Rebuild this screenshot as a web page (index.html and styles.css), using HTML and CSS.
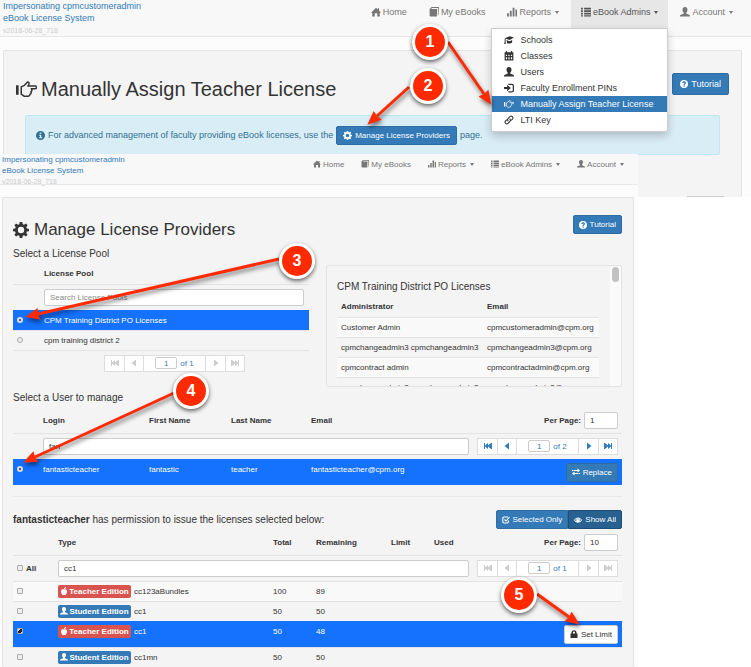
FILE: index.html
```html
<!DOCTYPE html>
<html lang="en">
<head>
  <meta charset="UTF-8">
  <title>eBook License System</title>
  <link rel="stylesheet" href="styles.css">
</head>
<body>
  <!-- icons -->
  <svg class="sprite" aria-hidden="true">
    <symbol id="home" viewBox="0 0 16 16"><path d="M8 1L0 9h2v6h4v-5h4v5h4V9h2l-3-3V2h-2v2z"/></symbol>
    <symbol id="book" viewBox="0 0 16 16"><path d="M4 0h12l-1 13h-1l.5-11.500H4V3h9l-.500 12H2L1 14V3z"/></symbol>
    <symbol id="stats" viewBox="0 0 16 16"><path d="M0 10h3v5H0zM4.500 6h3v9h-3zM9 1h3v14H9zM13.500 4H16v11h-2.500z"/></symbol>
    <symbol id="list" viewBox="0 0 16 16"><path d="M0 1h3v3H0zM5 1h11v3H5zM0 5h3v3H0zM5 5h11v3H5zM0 9h3v3H0zM5 9h11v3H5zM0 13h3v2H0zM5 13h11v2H5z"/></symbol>
    <symbol id="user" viewBox="0 0 16 16"><path d="M8 0c2.500 0 4 1.500 4 4.200C12 6.500 11 8 10 9v1.500c0 .5 5 1.500 6 3V15H0v-1.500c1-1.500 6-2.500 6-3V9C5 8 4 6.500 4 4.200 4 1.500 5.500 0 8 0z"/></symbol>
    <symbol id="cap" viewBox="0 0 16 16"><path d="M1 5l8-3 7 2-7 4zM4 8l5 2 4-2v4c-2 2-6 2-8 1zM1 6h1.500v5l1 3H0l1-3z"/></symbol>
    <symbol id="calendar" viewBox="0 0 16 16"><path fill-rule="evenodd" d="M1 2h2V0h2v2h6V0h2v2h2v13H1zM3 6v2h2V6zm4 0v2h2V6zm4 0v2h2V6zM3 10v3h2v-3zm4 0v3h2v-3zm4 0v3h2v-3z"/></symbol>
    <symbol id="login" viewBox="0 0 16 16"><path d="M0 6.500h5V3l6 5-6 5V9.500H0zM7 1h5c3 0 4 1 4 4v6c0 3-1 4-4 4H7v-2h5c1.500 0 2-.5 2-2V5c0-1.500-.5-2-2-2H7z"/></symbol>
    <symbol id="hand" viewBox="0 0 20 16"><path d="M0 4h2.500v9H0z"/><path d="M5 5.500L8 4l3-3.200c2.300 0 1.500 2.700.3 3.900H19c1.200 2.300 0 2.600-1 2.600h-3.500c1 1 .8 2.500-.3 2.700.6 1.200.2 2.300-.9 2.500-.2 1.500-1 2-2 2H8l-3-2z" fill="none" stroke="currentColor" stroke-width="1.400" stroke-linejoin="round"/></symbol>
    <symbol id="link" viewBox="0 0 16 16"><path d="M7 10C4.500 8 6 6 7.500 4.500l2-2C12 0 16 3.500 13.500 6.500l-2 2M9 6c2.500 2 1 4-.500 5.500l-2 2C4 16 0 12.500 2.500 9.500l2-2" fill="none" stroke="currentColor" stroke-width="1.700"/></symbol>
    <symbol id="info" viewBox="0 0 16 16"><path fill-rule="evenodd" d="M8 0a8 8 0 100 16A8 8 0 008 0zM6.500 2.500h3V5h-3zM5.500 6.500h4V11H11v2H5.500v-2H7V8.500H5.500z"/></symbol>
    <symbol id="question" viewBox="0 0 16 16"><path fill-rule="evenodd" d="M8 0a8 8 0 100 16A8 8 0 008 0zM7 11h2.500v2.300H7zM4.500 6C4.500 1.500 12 1.500 12 6c0 2-2.500 2.200-2.500 4H7c0-3 2.300-2.800 2.300-4 0-1.600-2.300-1.400-2.300 0z"/></symbol>
    <symbol id="cog" viewBox="0 0 16 16"><path fill-rule="evenodd" d="M6.700 0h2.600l.4 2.200 1.400.6L12.900 1.500l1.700 1.700-1.300 1.900.6 1.400 2.100.4v2.300l-2.100.4-.6 1.400 1.300 1.800-1.700 1.700-1.800-1.200-1.400.5L9.300 16H6.700l-.4-2.200-1.400-.5-1.800 1.200-1.700-1.700L2.700 11l-.6-1.400L0 9.200V6.900l2.100-.4.6-1.400L1.400 3.200l1.700-1.700 1.800 1.300 1.400-.6zM8 4.800a3.200 3.200 0 100 6.400 3.200 3.200 0 000-6.400z"/></symbol>
    <symbol id="first" viewBox="0 0 16 16"><path d="M0 2h2v5l6-5v5l6-5h2v12h-2L8 9v5L2 9v5H0z"/></symbol>
    <symbol id="prev" viewBox="0 0 16 16"><path d="M3 8l9-7v14z"/></symbol>
    <symbol id="next" viewBox="0 0 16 16"><path d="M13 8L4 1v14z"/></symbol>
    <symbol id="last" viewBox="0 0 16 16"><path d="M16 2h-2v5L8 2v5L2 2H0v12h2l6-5v5l6-5v5h2z"/></symbol>
    <symbol id="transfer" viewBox="0 0 16 16"><path d="M0 4h2v2H0zM3 4h8V1l5 4-5 4V6H3zM16 10h-2v2h2zM13 10H5V7l-5 4 5 4v-3h8z"/></symbol>
    <symbol id="check" viewBox="0 0 16 16"><path d="M12 2H4C2 2 1.500 3 1.500 5v6c0 2 .5 3 2.500 3h6c2 0 3-.5 3-3V9M5 7l3 3 7-8" fill="none" stroke="currentColor" stroke-width="2.200"/></symbol>
    <symbol id="eye" viewBox="0 0 16 16"><path fill-rule="evenodd" d="M0 8c4-7 12-7 16 0-4 7-12 7-16 0zm2 0c1 1.500 2 2.500 3.500 3C4 9 4 7 5.500 5 4 5.500 3 6.500 2 8zm8.500-3c1.500 2 1.500 4 0 6 1.500-.5 2.500-1.500 3.500-3-1-1.500-2-2.500-3.500-3zM7 5v2h2V5z"/></symbol>
    <symbol id="apple" viewBox="0 0 16 16"><path d="M8 4c0-2 1-4 4-4 0 2-1 4-4 4zm0 1c2-1 6-1 6 4 0 3-2 7-4 7-1 0-1-.5-2-.5S7 16 6 16c-2 0-4-4-4-7 0-5 4-5 6-4z"/></symbol>
    <symbol id="lock" viewBox="0 0 16 16"><path fill-rule="evenodd" d="M1 7h2V5c0-6 10-6 10 0v2h2v9H1zm5 0h4V5c0-2.500-4-2.500-4 0z"/></symbol>
  </svg>

  <div class="shots">
    <section class="page page-back">
      <header class="navbar">
        <div class="brand">
          <a href="#">Impersonating cpmcustomeradmin</a>
          <a href="#">eBook License System</a>
          <small>v2018-06-28_718</small>
        </div>
        <nav>
          <ul class="nav">
            <li><a href="#"><svg class="icon"><use href="#home"/></svg>Home</a></li>
            <li><a href="#"><svg class="icon"><use href="#book"/></svg>My eBooks</a></li>
            <li><a href="#"><svg class="icon"><use href="#stats"/></svg>Reports<span class="caret"></span></a></li>
            <li class="open">
              <a href="#"><svg class="icon"><use href="#list"/></svg>eBook Admins<span class="caret"></span></a>
              <ul class="dropdown">
                <li><a href="#"><svg class="icon"><use href="#cap"/></svg>Schools</a></li>
                <li><a href="#"><svg class="icon"><use href="#calendar"/></svg>Classes</a></li>
                <li><a href="#"><svg class="icon"><use href="#user"/></svg>Users</a></li>
                <li><a href="#"><svg class="icon"><use href="#login"/></svg>Faculty Enrollment PINs</a></li>
                <li class="active"><a href="#"><svg class="icon"><use href="#hand"/></svg>Manually Assign Teacher License</a></li>
                <li><a href="#"><svg class="icon"><use href="#link"/></svg>LTI Key</a></li>
              </ul>
            </li>
            <li><a href="#"><svg class="icon"><use href="#user"/></svg>Account<span class="caret"></span></a></li>
          </ul>
        </nav>
      </header>
      <div class="well">
        <div class="title-row">
          <h1><svg class="icon"><use href="#hand"/></svg>Manually Assign Teacher License</h1>
          <button class="btn"><svg class="icon"><use href="#question"/></svg>Tutorial</button>
        </div>
        <div class="alert">
          <svg class="icon"><use href="#info"/></svg>
          <span>For advanced management of faculty providing eBook licenses, use the</span>
          <button class="btn"><svg class="icon"><use href="#cog"/></svg>Manage License Providers</button>
          <span>page.</span>
        </div>
        <div class="well-foot"></div>
      </div>
    </section>

    <section class="page page-front">
      <header class="navbar">
        <div class="brand">
          <a href="#">Impersonating cpmcustomeradmin</a>
          <a href="#">eBook License System</a>
          <small>v2018-06-28_718</small>
        </div>
        <nav>
          <ul class="nav">
            <li><a href="#"><svg class="icon"><use href="#home"/></svg>Home</a></li>
            <li><a href="#"><svg class="icon"><use href="#book"/></svg>My eBooks</a></li>
            <li><a href="#"><svg class="icon"><use href="#stats"/></svg>Reports<span class="caret"></span></a></li>
            <li><a href="#"><svg class="icon"><use href="#list"/></svg>eBook Admins<span class="caret"></span></a></li>
            <li><a href="#"><svg class="icon"><use href="#user"/></svg>Account<span class="caret"></span></a></li>
          </ul>
        </nav>
      </header>
      <div class="well">
        <div class="title-row">
          <h1><svg class="icon"><use href="#cog"/></svg>Manage License Providers</h1>
          <button class="btn"><svg class="icon"><use href="#question"/></svg>Tutorial</button>
        </div>

        <div class="pools">
          <div class="pool-list">
            <h2>Select a License Pool</h2>
            <table class="pool-table">
              <colgroup><col class="c-radio"><col></colgroup>
              <tr class="head"><th></th><th>License Pool</th></tr>
              <tr class="filter"><td></td><td><input class="field" type="text" placeholder="Search License Pools" aria-label="Search License Pools"></td></tr>
              <tr class="selected"><td><input type="radio" name="pool" id="pool1" checked></td><td><label for="pool1">CPM Training District PO Licenses</label></td></tr>
              <tr><td><input type="radio" name="pool" id="pool2"></td><td><label for="pool2">cpm training district 2</label></td></tr>
            </table>
            <div class="pool-foot">
              <div class="pager off">
                <button disabled aria-label="First"><svg class="icon"><use href="#first"/></svg></button>
                <button disabled aria-label="Previous"><svg class="icon"><use href="#prev"/></svg></button>
                <label class="pager-page"><input type="text" value="1">of 1</label>
                <button disabled aria-label="Next"><svg class="icon"><use href="#next"/></svg></button>
                <button disabled aria-label="Last"><svg class="icon"><use href="#last"/></svg></button>
              </div>
            </div>
          </div>
          <div class="admins">
            <div class="admins-body">
              <h2>CPM Training District PO Licenses</h2>
              <table class="admin-table">
                <colgroup><col class="c-admin"><col></colgroup>
                <tr class="head"><th>Administrator</th><th>Email</th></tr>
                <tr><td>Customer Admin</td><td>cpmcustomeradmin@cpm.org</td></tr>
                <tr><td>cpmchangeadmin3 cpmchangeadmin3</td><td>cpmchangeadmin3@cpm.org</td></tr>
                <tr><td>cpmcontract admin</td><td>cpmcontractadmin@cpm.org</td></tr>
                <tr><td>cpmchangeadmin2 cpmchangeadmin2</td><td>cpmchangeadmin2@cpm.org</td></tr>
              </table>
            </div>
            <div class="track"><div class="thumb"></div></div>
          </div>
        </div>

        <h2>Select a User to manage</h2>
        <table class="user-table">
          <colgroup><col class="c-sel"><col class="c-login"><col class="c-first"><col class="c-last"><col><col class="c-tools"></colgroup>
          <tr class="head">
            <th></th><th>Login</th><th>First Name</th><th>Last Name</th><th>Email</th>
            <th><label class="per-page">Per Page:<input class="field" type="text" value="1"></label></th>
          </tr>
          <tr class="filter">
            <td></td>
            <td colspan="4"><input class="field" type="text" value="fan" aria-label="Search users"></td>
            <td>
              <div class="pager">
                <button aria-label="First"><svg class="icon"><use href="#first"/></svg></button>
                <button aria-label="Previous"><svg class="icon"><use href="#prev"/></svg></button>
                <label class="pager-page"><input type="text" value="1">of 2</label>
                <button aria-label="Next"><svg class="icon"><use href="#next"/></svg></button>
                <button aria-label="Last"><svg class="icon"><use href="#last"/></svg></button>
              </div>
            </td>
          </tr>
          <tr class="selected tall">
            <td><input type="radio" name="user" aria-label="fantasticteacher" checked></td>
            <td>fantasticteacher</td><td>fantastic</td><td>teacher</td><td>fantasticteacher@cpm.org</td>
            <td class="tools"><button class="btn"><svg class="icon"><use href="#transfer"/></svg>Replace</button></td>
          </tr>
        </table>
        <hr>

        <div class="license-head">
          <h2><b>fantasticteacher</b> has permission to issue the licenses selected below:</h2>
          <div class="btn-group">
            <button class="btn"><svg class="icon"><use href="#check"/></svg>Selected Only</button>
            <button class="btn pressed"><svg class="icon"><use href="#eye"/></svg>Show All</button>
          </div>
        </div>
        <table class="license-table">
          <colgroup><col class="c-all"><col><col class="c-num"><col class="c-remain"><col class="c-num"><col class="c-num"><col class="c-tools"></colgroup>
          <tr class="head">
            <th></th><th>Type</th><th>Total</th><th>Remaining</th><th>Limit</th><th>Used</th>
            <th><label class="per-page">Per Page:<input class="field" type="text" value="10"></label></th>
          </tr>
          <tr class="filter">
            <td><label class="all"><input type="checkbox">All</label></td>
            <td colspan="5"><input class="field" type="text" value="cc1" aria-label="Search licenses"></td>
            <td>
              <div class="pager off">
                <button disabled aria-label="First"><svg class="icon"><use href="#first"/></svg></button>
                <button disabled aria-label="Previous"><svg class="icon"><use href="#prev"/></svg></button>
                <label class="pager-page"><input type="text" value="1">of 1</label>
                <button disabled aria-label="Next"><svg class="icon"><use href="#next"/></svg></button>
                <button disabled aria-label="Last"><svg class="icon"><use href="#last"/></svg></button>
              </div>
            </td>
          </tr>
          <tr class="stripe">
            <td><input type="checkbox" id="lic1"></td>
            <td><label class="type" for="lic1"><span class="tag teacher"><svg class="icon"><use href="#apple"/></svg>Teacher Edition</span>cc123aBundles</label></td>
            <td>100</td><td>89</td><td></td><td></td><td></td>
          </tr>
          <tr>
            <td><input type="checkbox" id="lic2"></td>
            <td><label class="type" for="lic2"><span class="tag"><svg class="icon"><use href="#user"/></svg>Student Edition</span>cc1</label></td>
            <td>50</td><td>50</td><td></td><td></td><td></td>
          </tr>
          <tr class="selected tall">
            <td><input type="checkbox" id="lic3" checked></td>
            <td><label class="type" for="lic3"><span class="tag teacher"><svg class="icon"><use href="#apple"/></svg>Teacher Edition</span>cc1</label></td>
            <td>50</td><td>48</td><td></td><td></td>
            <td class="tools"><button class="btn plain"><svg class="icon"><use href="#lock"/></svg>Set Limit</button></td>
          </tr>
          <tr>
            <td><input type="checkbox" id="lic4"></td>
            <td><label class="type" for="lic4"><span class="tag"><svg class="icon"><use href="#user"/></svg>Student Edition</span>cc1mn</label></td>
            <td>50</td><td>50</td><td></td><td></td><td></td>
          </tr>
        </table>
      </div>
    </section>

    <!-- numbered steps -->
    <div class="steps">
      <svg class="arrows" viewBox="0 0 751 667" aria-hidden="true">
        <defs>
          <marker id="head" markerUnits="userSpaceOnUse" markerWidth="14" markerHeight="14" refX="1" refY="6" orient="auto">
            <path d="M0 0L14 6L0 12L1 6z" fill="#ff2a00"/>
          </marker>
        </defs>
        <g stroke="#ff2a00" stroke-width="3" marker-end="url(#head)">
          <path d="M448 42L484 94"/>
          <path d="M409 87L377 116"/>
          <path d="M279 259L38 314"/>
          <path d="M174 393L35 457"/>
          <path d="M537 594L569 617"/>
        </g>
      </svg>
      <span class="step step1">1</span>
      <span class="step step2">2</span>
      <span class="step step3">3</span>
      <span class="step step4">4</span>
      <span class="step step5">5</span>
    </div>
  </div>
</body>
</html>
```
FILE: styles.css
```css
* {
  box-sizing: border-box;
}
body {
  margin: 0;
  background: #fff;
  color: #333;
  font-family: "Liberation Sans", Arial, sans-serif;
  font-size: 8px;
}
ul {
  list-style: none;
  margin: 0;
  padding: 0;
}
a {
  color: #337ab7;
  text-decoration: none;
}
h1, h2 {
  margin: 0;
  font-weight: normal;
}
button, input {
  font: inherit;
  color: inherit;
}
.sprite {
  position: absolute;
  width: 0;
  height: 0;
}
.icon {
  width: 8px;
  height: 8px;
  flex: none;
  fill: currentColor;
}

/* two pages, the second one laid over the first */
.shots {
  position: relative;
  display: grid;
  grid-template-columns: 1fr 113px;
  grid-template-rows: 154px 43px auto;
  min-height: 100vh;
  overflow: hidden;
}
.page {
  display: flex;
  flex-direction: column;
  background: #fcfcfc;
}
.page-back {
  grid-area: 1 / 1 / 3 / 3;
  font-size: 9px;
}
.page-front {
  grid-area: 2 / 1 / 4 / 2;
  z-index: 1;
}

/* navbar */
.navbar {
  display: flex;
  justify-content: space-between;
  background: #f8f8f8;
  border-bottom: 1px solid #e7e7e7;
}
.brand {
  display: flex;
  flex-direction: column;
}
.brand small {
  color: #ccc;
  font-size: 7px;
}
.nav {
  display: flex;
}
.nav a {
  display: flex;
  align-items: center;
  gap: 2px;
  color: #777;
  white-space: nowrap;
}
.caret {
  margin-left: 2px;
  border: 2px solid transparent;
  border-top: 3px solid currentColor;
  border-bottom: 0;
}
.page-back .navbar {
  height: 37px;
  padding: 0 8px 0 3px;
}
.page-back .brand {
  line-height: 12px;
}
.page-back .brand small {
  line-height: 14px;
}
.page-back .nav {
  gap: 2px;
}
.page-back .nav > li > a {
  height: 28px;
  padding: 0 10px 4px;
}
.page-back .nav .icon {
  width: 10px;
  height: 10px;
}
.nav .open {
  position: relative;
  background: #e7e7e7;
}
.page-back .nav .open {
  height: 28px;
}
.page-back .nav .open > a {
  color: #555;
}
.page-front .navbar {
  height: 31px;
  padding: 0 14px 0 2px;
}
.page-front .brand {
  line-height: 11px;
}
.page-front .nav {
  gap: 17px;
  height: 20px;
}
.page-front .nav a {
  height: 20px;
}

.dropdown {
  position: absolute;
  top: 28px;
  right: 0;
  width: 177px;
  padding: 3px 0;
  background: #fff;
  border: 1px solid #ccc;
  border-radius: 0 0 2px 2px;
  box-shadow: 0 4px 8px rgba(0, 0, 0, 0.2);
}
.dropdown a {
  gap: 6px;
  height: 16px;
  padding-left: 12px;
  color: #333;
}
.dropdown .active a {
  background: #337ab7;
  color: #fff;
}

/* content */
.well {
  flex: 1;
  background: #f4f4f4;
  border: 1px solid #e3e3e3;
  border-radius: 2px;
}
.title-row {
  display: flex;
  justify-content: space-between;
  align-items: flex-start;
}
h1 {
  display: flex;
  align-items: center;
}
.btn {
  display: inline-flex;
  align-items: center;
  justify-content: center;
  gap: 3px;
  height: 19px;
  padding: 0 5px;
  background: #337ab7;
  border: 1px solid #2e6da4;
  border-radius: 2px;
  color: #fff;
  white-space: nowrap;
}
.btn.plain {
  background: #fff;
  border-color: #ccc;
  color: #333;
}
.page-back .well {
  margin: 13px 9px 0 3px;
  padding: 22px 12px 0;
  border-bottom: 0;
}
.page-back h1 {
  height: 32px;
  gap: 4px;
  font-size: 20px;
}
.page-back h1 .icon {
  width: 21px;
  height: 17px;
}
.page-back .title-row .btn {
  height: 22px;
  padding: 0 7px;
  font-size: 9px;
}
.page-back .btn {
  padding: 0 6px;
  font-size: 8px;
}
.alert {
  display: flex;
  align-items: center;
  gap: 3px;
  height: 40px;
  margin: 10px 9px 0;
  padding: 0 10px;
  background: #d9edf7;
  border: 1px solid #bce8f1;
  border-radius: 2px;
  color: #31708f;
  white-space: nowrap;
}
.alert .icon {
  width: 9px;
  height: 9px;
}
.well-foot {
  width: 37px;
  margin: 41px 5px 0 auto;
  border-top: 1px solid #ccc;
}

.page-front .well {
  margin: 12px 4px 0 2px;
  padding: 17px 11px 0 10px;
  border-bottom: 0;
}
.page-front h1 {
  height: 29px;
  gap: 5px;
  font-size: 17px;
}
.page-front h1 .icon {
  width: 16px;
  height: 16px;
}
h2 {
  font-size: 10px;
  line-height: 20px;
}

/* tables */
table {
  width: 100%;
  table-layout: fixed;
  border-collapse: collapse;
}
th, td {
  height: 20px;
  padding: 0 4px;
  text-align: left;
  border-top: 1px solid #e3e3e3;
  white-space: nowrap;
}
.head th {
  border-top: 0;
}
.filter td {
  height: 26px;
}
.selected td {
  background: #1472ff;
  border-color: #1472ff;
  color: #fff;
}
.tall td {
  height: 26px;
  padding-bottom: 6px;
}
.tall .tools {
  padding-bottom: 0;
  text-align: right;
}
.stripe td {
  background: #f9f9f9;
}
.field {
  display: block;
  width: 100%;
  height: 17px;
  padding: 0 5px;
  background: #fff;
  border: 1px solid #ccc;
  border-radius: 2px;
}
.field::placeholder {
  color: #888;
}
input[type="radio"], input[type="checkbox"] {
  display: block;
  appearance: none;
  flex: none;
  width: 6px;
  height: 6px;
  margin: 0;
  background: #eee;
  border: 1px solid #aaa;
  border-radius: 1px;
}
input[type="radio"] {
  border-radius: 50%;
}
input[type="radio"]:checked {
  background: #333;
  border: 2px solid #ddd;
}
input[type="checkbox"]:checked {
  background: linear-gradient(135deg, #ddd 35%, #222 35% 75%, #ddd 75%);
}
.c-radio { width: 27px; }
.c-admin { width: 146px; }
.c-sel { width: 26px; }
.c-login { width: 106px; }
.c-first { width: 82px; }
.c-last { width: 80px; }
.c-tools { width: 149px; }
.c-all { width: 41px; }
.c-num { width: 43px; }
.c-remain { width: 75px; }

.pools {
  display: grid;
  grid-template-columns: 1fr 1fr;
  gap: 17px;
  height: 144px;
}
.pool-table {
  border-bottom: 1px solid #e3e3e3;
}
.pool-table .field {
  width: 260px;
  max-width: 100%;
}
.pool-foot {
  display: flex;
  justify-content: center;
  padding: 4px 0 0 27px;
}
.admins {
  display: flex;
  height: 122px;
  margin-top: 21px;
  overflow: hidden;
  border: 1px solid #e3e3e3;
  border-radius: 2px;
}
.admins-body {
  flex: 1;
  padding: 11px 11px 0 10px;
}
.admin-table tr:nth-child(even) td {
  background: #f9f9f9;
}
.track {
  width: 11px;
  padding: 1px 2px;
  background: #fafafa;
}
.thumb {
  height: 15px;
  background: #c1c1c1;
  border-radius: 4px;
}

.pager {
  display: flex;
  width: 141px;
  height: 17px;
  background: #fff;
  border: 1px solid #ddd;
  color: #337ab7;
}
.pager button {
  display: flex;
  align-items: center;
  justify-content: center;
  width: 19px;
  padding: 0;
  background: none;
  border: 0;
}
.pager.off button {
  color: #ccc;
}
.pager button + button {
  border-left: 1px solid #ddd;
}
.pager-page {
  flex: 1;
  display: flex;
  align-items: center;
  justify-content: center;
  gap: 3px;
  border: 1px solid #ddd;
  border-width: 0 1px;
}
.pager-page input {
  width: 22px;
  height: 12px;
  padding: 0;
  text-align: center;
  background: #fff;
  border: 1px solid #ccc;
  border-radius: 2px;
}
.per-page {
  display: flex;
  align-items: center;
  justify-content: flex-end;
  gap: 3px;
}
.per-page .field {
  width: 34px;
  font-weight: normal;
}
.user-table .head th, .license-table .head th {
  height: 25px;
}
hr {
  margin: 11px 0 13px;
  border: 0;
  border-top: 1px solid #e9e9e9;
}
.license-head {
  display: flex;
  justify-content: space-between;
}
.btn-group {
  display: flex;
}
.btn-group .btn:first-child {
  border-radius: 2px 0 0 2px;
}
.btn-group .btn:last-child {
  border-radius: 0 2px 2px 0;
}
.btn.pressed {
  background: #286090;
  border-color: #204d74;
}
.all, .type {
  display: flex;
  align-items: center;
  gap: 3px;
}
.all {
  font-weight: bold;
}
.tag {
  display: flex;
  align-items: center;
  justify-content: center;
  gap: 1px;
  width: 73px;
  height: 13px;
  background: #337ab7;
  border-radius: 2px;
  color: #fff;
  font-weight: bold;
}
.tag.teacher {
  background: #d9534f;
}

/* steps */
.steps {
  position: absolute;
  top: 0;
  left: 0;
  z-index: 2;
  pointer-events: none;
}
.arrows {
  display: block;
  width: 751px;
  height: 667px;
  fill: none;
  filter: drop-shadow(1px 3px 2px rgba(0, 0, 0, 0.5));
}
.step {
  position: absolute;
  width: 36px;
  height: 36px;
  border: 3px solid #fff;
  border-radius: 50%;
  background: #ff2a00;
  box-shadow: 0 2px 4px rgba(0, 0, 0, 0.6);
  color: #fff;
  font-size: 16px;
  font-weight: bold;
  line-height: 30px;
  text-align: center;
}
.step1 { left: 412px; top: 24px; }
.step2 { left: 410px; top: 68px; }
.step3 { left: 279px; top: 243px; }
.step4 { left: 173px; top: 373px; }
.step5 { left: 501px; top: 577px; }
```
